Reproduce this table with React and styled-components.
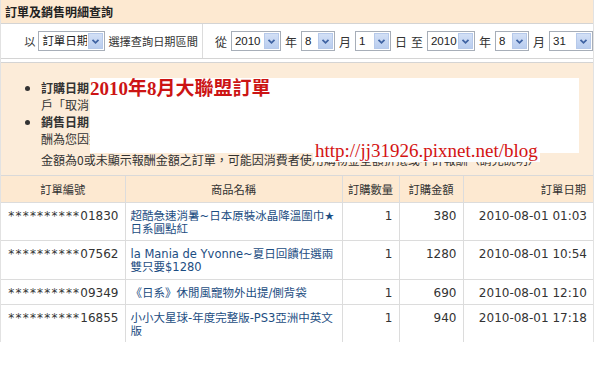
import styled, { createGlobalStyle } from "styled-components";

const GlobalStyle = createGlobalStyle`
  html, body {
    margin: 0;
    padding: 0;
    background: #fff;
  }
  body {
    font-family: "DejaVu Sans", "Noto Sans CJK TC", sans-serif;
    font-size: 12px;
    color: #333;
  }
`;

const cjk = `"Noto Sans CJK TC", "Noto Sans CJK SC", sans-serif`;

const Page = styled.div`
  width: 592px;
  border-left: 1px solid #e2e2e2;
  border-right: 1px solid #e2e2e2;
  overflow: hidden;
`;

const TitleBar = styled.div`
  height: 23px;
  background: #fde9d1;
  border-bottom: 1px solid #d4d4d4;
  display: flex;
  align-items: center;
  padding-left: 4px;
  font-family: ${cjk};
  font-weight: bold;
  font-size: 12px;
  color: #222;
`;

const FilterRow = styled.div`
  height: 34px;
  display: flex;
  border-bottom: 1px solid #d4d4d4;
`;

const FilterCell = styled.div`
  display: flex;
  align-items: center;
  gap: ${(p) => (p.$left ? "3px" : "4px")};
  white-space: nowrap;
  ${(p) =>
    p.$left
      ? `width: 207px; justify-content: flex-end; padding-right: 4px; border-right: 1px solid #dcdcdc;`
      : `flex: 1; padding-left: 12px;`}
`;

const Label = styled.span`
  font-family: ${cjk};
  font-size: ${(p) => (p.$small ? "11.2px" : "12px")};
  color: #333;
`;

const Select = styled.span`
  display: inline-flex;
  flex-shrink: 0;
  box-sizing: border-box;
  width: ${(p) => p.$w}px;
  height: 20px;
  border: 1px solid #a7aeb8;
  background: #fff;
`;

const SelectText = styled.span`
  flex: 1;
  padding-left: 3px;
  line-height: 18px;
  font-size: 11.5px;
  color: #222;
  font-family: "Liberation Sans", ${cjk};
  overflow: hidden;
  white-space: nowrap;
`;

const ArrowBox = styled.span`
  width: 15px;
  flex-shrink: 0;
  box-sizing: border-box;
  margin: 1px;
  background: linear-gradient(#d3e0f6, #b9cdef);
  border: 1px solid #b6c9ea;
  display: flex;
  align-items: center;
  justify-content: center;
`;

const Spacer = styled.div`
  height: 3px;
  border-bottom: 1px solid #d4d4d4;
`;

const InfoBox = styled.div`
  position: relative;
  background: #fcecd9;
  padding: 16px 0 0 0;
  height: 96px;
`;

const Bullets = styled.ul`
  margin: 0;
  padding-left: 40px;
  list-style: disc;
  font-family: ${cjk};
  font-size: 12px;
  line-height: 17px;
  color: #333;
`;

const Line = styled.div`
  white-space: nowrap;
`;

const Note = styled.div`
  padding-left: 40px;
  margin-top: 4px;
  font-family: ${cjk};
  font-size: 12px;
  line-height: 17px;
  white-space: nowrap;
  color: #333;
`;

const Cover = styled.div`
  position: absolute;
  left: 89px;
  top: 15px;
  width: 489px;
  height: 75px;
  background: #fff;
`;

const Stamp = styled.div`
  font-family: "Liberation Serif", ${cjk};
  font-weight: bold;
  font-size: 19px;
  line-height: 22px;
  color: #cc1414;
  white-space: nowrap;
`;

const UrlTag = styled.div`
  position: absolute;
  left: 312px;
  top: 77px;
  padding: 0 2px;
  background: #fbfdff;
  font-family: "Liberation Serif", serif;
  font-size: 19px;
  line-height: 22px;
  color: #d41212;
  white-space: nowrap;
`;

const Table = styled.table`
  width: 592px;
  border-collapse: collapse;
  table-layout: fixed;
  background: #fff;
`;

const Th = styled.th`
  height: 27px;
  padding: 0 ${(p) => (p.$align === "right" ? "7px" : "1px")} 0 1px;
  box-sizing: border-box;
  background: #fde9d1;
  border-top: 1px solid #d9d9d9;
  border-left: 1px solid #dcdcdc;
  border-bottom: 1px solid #dcdcdc;
  font-family: ${cjk};
  font-weight: normal;
  font-size: 11.3px;
  color: #333;
  white-space: nowrap;
  text-align: ${(p) => p.$align || "center"};
  &:first-child {
    border-left: none;
  }
`;

const Td = styled.td`
  vertical-align: top;
  padding: 7px 6px 0 ${(p) => (p.$align === "left" ? "5px" : "6px")};
  height: ${(p) => p.$h}px;
  box-sizing: border-box;
  border-left: 1px solid #dcdcdc;
  border-bottom: ${(p) => (p.$last ? "none" : "1px solid #dcdcdc")};
  line-height: 13px;
  font-size: 12px;
  color: #333;
  text-align: ${(p) => p.$align || "right"};
  white-space: nowrap;
  overflow: hidden;
  &:first-child {
    border-left: none;
  }
`;

const Stars = styled.span`
  letter-spacing: 1.2px;
`;

const ItemLink = styled.a`
  color: #1c4d82;
  text-decoration: none;
  font-size: 11.5px;
  font-family: "DejaVu Sans", ${cjk};
`;

function Chevron() {
  return (
    <svg width="9" height="7" viewBox="0 0 9 7">
      <path d="M1.5 1.8 L4.5 4.8 L7.5 1.8" fill="none" stroke="#3f63a3" strokeWidth="1.8" />
    </svg>
  );
}

function FakeSelect({ value, w }) {
  return (
    <Select $w={w}>
      <SelectText>{value}</SelectText>
      <ArrowBox>
        <Chevron />
      </ArrowBox>
    </Select>
  );
}

const orders = [
  {
    id: "01830",
    name: ["超酷急速消暑~日本原裝冰晶降溫圍巾★", "日系圓點紅"],
    qty: 1,
    amount: 380,
    date: "2010-08-01 01:03",
    h: 38,
  },
  {
    id: "07562",
    name: ["la Mania de Yvonne~夏日回饋任選兩", "雙只要$1280"],
    qty: 1,
    amount: 1280,
    date: "2010-08-01 10:54",
    h: 39,
  },
  {
    id: "09349",
    name: ["《日系》休閒風寵物外出提/側背袋"],
    qty: 1,
    amount: 690,
    date: "2010-08-01 12:10",
    h: 25,
  },
  {
    id: "16855",
    name: ["小小大星球-年度完整版-PS3亞洲中英文", "版"],
    qty: 1,
    amount: 940,
    date: "2010-08-01 17:18",
    h: 37,
  },
];

export default function App() {
  return (
    <>
      <GlobalStyle />
      <Page>
        <TitleBar>訂單及銷售明細查詢</TitleBar>

        <FilterRow>
          <FilterCell $left>
            <Label $small>以</Label>
            <FakeSelect value="訂單日期" w={67} />
            <Label $small>選擇查詢日期區間</Label>
          </FilterCell>
          <FilterCell>
            <Label>從</Label>
            <FakeSelect value="2010" w={50} />
            <Label>年</Label>
            <FakeSelect value="8" w={34} />
            <Label>月</Label>
            <FakeSelect value="1" w={36} />
            <Label>日</Label>
            <Label>至</Label>
            <FakeSelect value="2010" w={48} />
            <Label>年</Label>
            <FakeSelect value="8" w={34} />
            <Label>月</Label>
            <FakeSelect value="31" w={44} />
          </FilterCell>
        </FilterRow>

        <Spacer />

        <InfoBox>
          <Bullets>
            <li>
              <Line>
                <b>訂購日期</b>：為消費者於合作網站完成下單之日期，報酬將於商品鑑賞期過後依實際結帳期限
              </Line>
              <Line>戶「取消、退貨」之訂單，將不列入報酬計算，亦不會顯示於本頁之訂單明細中。</Line>
            </li>
            <li>
              <Line>
                <b>銷售日期</b>：為廠商確認出貨並完成交易之日期，確認後之報酬金額將於結算時發放，恕不許用
              </Line>
              <Line>酬為您因推薦所獲得之報酬金額，若有任何疑問，歡迎至服務中心查詢或於討論區留言</Line>
            </li>
          </Bullets>
          <Note>金額為0或未顯示報酬金額之訂單，可能因消費者使用購物金全額折抵或不計報酬（請見說明）</Note>
          <Cover>
            <Stamp>2010年8月大聯盟訂單</Stamp>
          </Cover>
          <UrlTag>http://jj31926.pixnet.net/blog</UrlTag>
        </InfoBox>

        <Table>
          <colgroup>
            <col style={{ width: 124 }} />
            <col style={{ width: 217 }} />
            <col style={{ width: 57 }} />
            <col style={{ width: 64 }} />
            <col />
          </colgroup>
          <thead>
            <tr>
              <Th>訂單編號</Th>
              <Th>商品名稱</Th>
              <Th>訂購數量</Th>
              <Th>訂購金額</Th>
              <Th $align="right">訂單日期</Th>
            </tr>
          </thead>
          <tbody>
            {orders.map((o, i) => {
              const last = i === orders.length - 1;
              return (
                <tr key={o.id}>
                  <Td $h={o.h} $last={last}>
                    <Stars>**********</Stars>
                    {o.id}
                  </Td>
                  <Td $h={o.h} $last={last} $align="left">
                    <ItemLink href="#">
                      {o.name.map((n, k) => (
                        <span key={k}>
                          {k > 0 && <br />}
                          {n}
                        </span>
                      ))}
                    </ItemLink>
                  </Td>
                  <Td $h={o.h} $last={last}>{o.qty}</Td>
                  <Td $h={o.h} $last={last}>{o.amount}</Td>
                  <Td $h={o.h} $last={last}>{o.date}</Td>
                </tr>
              );
            })}
          </tbody>
        </Table>
      </Page>
    </>
  );
}
